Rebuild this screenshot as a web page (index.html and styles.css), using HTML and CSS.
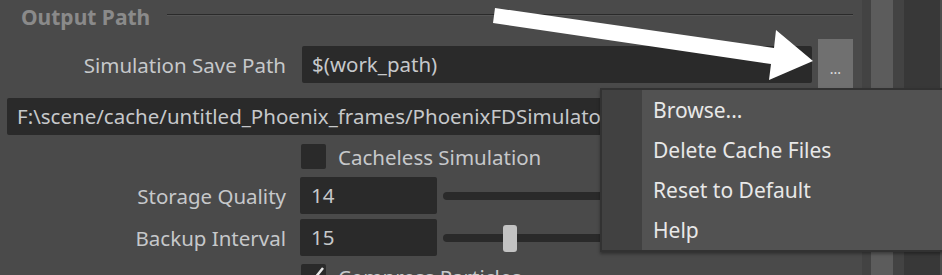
FILE: index.html
```html
<!DOCTYPE html>
<html lang="en">
<head>
    <meta charset="UTF-8">
    <meta name="viewport" content="width=device-width, initial-scale=1.0">
    <title>Output Path</title>
    <link rel="stylesheet" href="styles.css">
</head>
<body>
    <div class="window">
        <div class="panel">
            <div class="section-head">
                <span class="section-title">Output Path</span>
                <div class="rule"></div>
            </div>
            <div class="row save-row">
                <label class="lbl">Simulation Save Path</label>
                <div class="field save-field">$(work_path)</div>
                <div class="btn-dots">...</div>
            </div>
            <div class="field path-field">F:\scene/cache/untitled_Phoenix_frames/PhoenixFDSimulator1_####.aur</div>
            <div class="check-row">
                <span class="box"></span>
                <span class="check-label">Cacheless Simulation</span>
            </div>
            <div class="row num-row">
                <label class="lbl">Storage Quality</label>
                <div class="field num">14</div>
                <div class="slider"><span class="handle" style="left: 200px;"></span></div>
            </div>
            <div class="row num-row second">
                <label class="lbl">Backup Interval</label>
                <div class="field num">15</div>
                <div class="slider"><span class="handle" style="left: 60px;"></span></div>
            </div>
            <div class="check-row last">
                <span class="box checked">
                    <svg width="25" height="25" viewBox="0 0 25 25"><path d="M5 14l5 5 12-15" fill="none" stroke="#e8e8e8" stroke-width="2.5"/></svg>
                </span>
                <span class="check-label">Compress Particles</span>
            </div>
        </div>
        <div class="strips">
            <div class="strip s1"></div>
            <div class="strip s2"></div>
            <div class="strip s3"></div>
            <div class="strip s4"></div>
            <div class="strip s5"></div>
            <div class="strip s6"></div>
        </div>

        <!-- annotation arrow pointing at the browse button -->
        <svg class="arrow" width="942" height="275" viewBox="0 0 942 275">
            <polygon points="495,8 774,48 776,30 813,61 769,80 771,64 493,23" fill="#ffffff"/>
        </svg>

        <ul class="menu">
            <li>Browse...</li>
            <li>Delete Cache Files</li>
            <li>Reset to Default</li>
            <li>Help</li>
        </ul>
    </div>
</body>
</html>
```

FILE: styles.css
```css
body {
    margin: 0;
    background: #4a4a4a;
    font-family: "Noto Sans", "Open Sans", sans-serif;
    font-size: 20.5px;
    color: #c6c8ca;
    overflow: hidden;
}
.window {
    position: relative;
    display: flex;
    width: 942px;
    height: 275px;
    overflow: hidden;
}
.panel {
    width: 854px;
    flex: none;
}
.section-head {
    display: flex;
    height: 39px;
    padding-left: 21px;
}
.section-title {
    font-weight: bold;
    font-size: 21px;
    line-height: 34px;
    color: #8a8a8a;
}
.rule {
    flex: 1;
    height: 1px;
    margin: 14px 1px 0 17px;
    background: #2a2a2a;
    box-shadow: 0 1px 0 #555;
}
.row {
    display: flex;
    align-items: center;
}
.lbl {
    width: 286px;
    flex: none;
    text-align: right;
    white-space: nowrap;
}
.field {
    height: 37px;
    line-height: 37px;
    padding-left: 10px;
    box-sizing: border-box;
    background: #2a2a2a;
    border-radius: 2px;
    white-space: nowrap;
    overflow: hidden;
}
.save-row {
    height: 51px;
}
.save-field {
    width: 510px;
    margin-left: 16px;
}
.btn-dots {
    width: 35px;
    height: 51px;
    margin-left: 6px;
    background: #707070;
    color: #e0e0e0;
    font-size: 14px;
    line-height: 60px;
    text-align: center;
}
.path-field {
    width: 806px;
    margin: 8px 0 0 7px;
}
.check-row {
    display: flex;
    align-items: center;
    height: 25px;
    margin-top: 9px;
    padding-left: 301px;
}
.check-row.last {
    margin-top: 8px;
}
.box {
    width: 25px;
    height: 25px;
    flex: none;
    background: #2a2a2a;
    border-radius: 2px;
}
.check-label {
    margin-left: 12px;
}
.num-row {
    margin-top: 8px;
}
.num-row.second {
    margin-top: 5px;
}
.num {
    width: 137px;
    margin-left: 14px;
    padding-left: 11px;
}
.slider {
    position: relative;
    flex: 1;
    height: 8px;
    margin-left: 6px;
    background: #2a2a2a;
    border-radius: 4px;
}
.handle {
    position: absolute;
    top: -9px;
    width: 14px;
    height: 27px;
    background: #c3c3c3;
    border-radius: 3px;
}
.strips {
    display: flex;
    flex: 1;
}
.strip {
    height: 100%;
}
.s1 { width: 8px; background: #4a4a4a; }
.s2 { width: 9px; background: #434343; }
.s3 { width: 22px; background: #5c5c5c; }
.s4 { width: 11px; background: #434343; }
.s5 { width: 36px; background: #383838; }
.s6 { flex: 1; background: #4c4c4c; }
.arrow {
    position: absolute;
    left: 0;
    top: 0;
    pointer-events: none;
}
.menu {
    position: absolute;
    left: 600px;
    top: 88px;
    width: 340px;
    margin: 0;
    padding: 0;
    list-style: none;
    border: 2px solid #323232;
    background: linear-gradient(to right, #414141 40px, #525252 40px);
    box-shadow: 0 2px 3px rgba(0, 0, 0, 0.35);
    color: #e8e8e8;
    font-size: 21px;
}
.menu li {
    height: 40px;
    line-height: 40px;
    padding-left: 51px;
}
```
